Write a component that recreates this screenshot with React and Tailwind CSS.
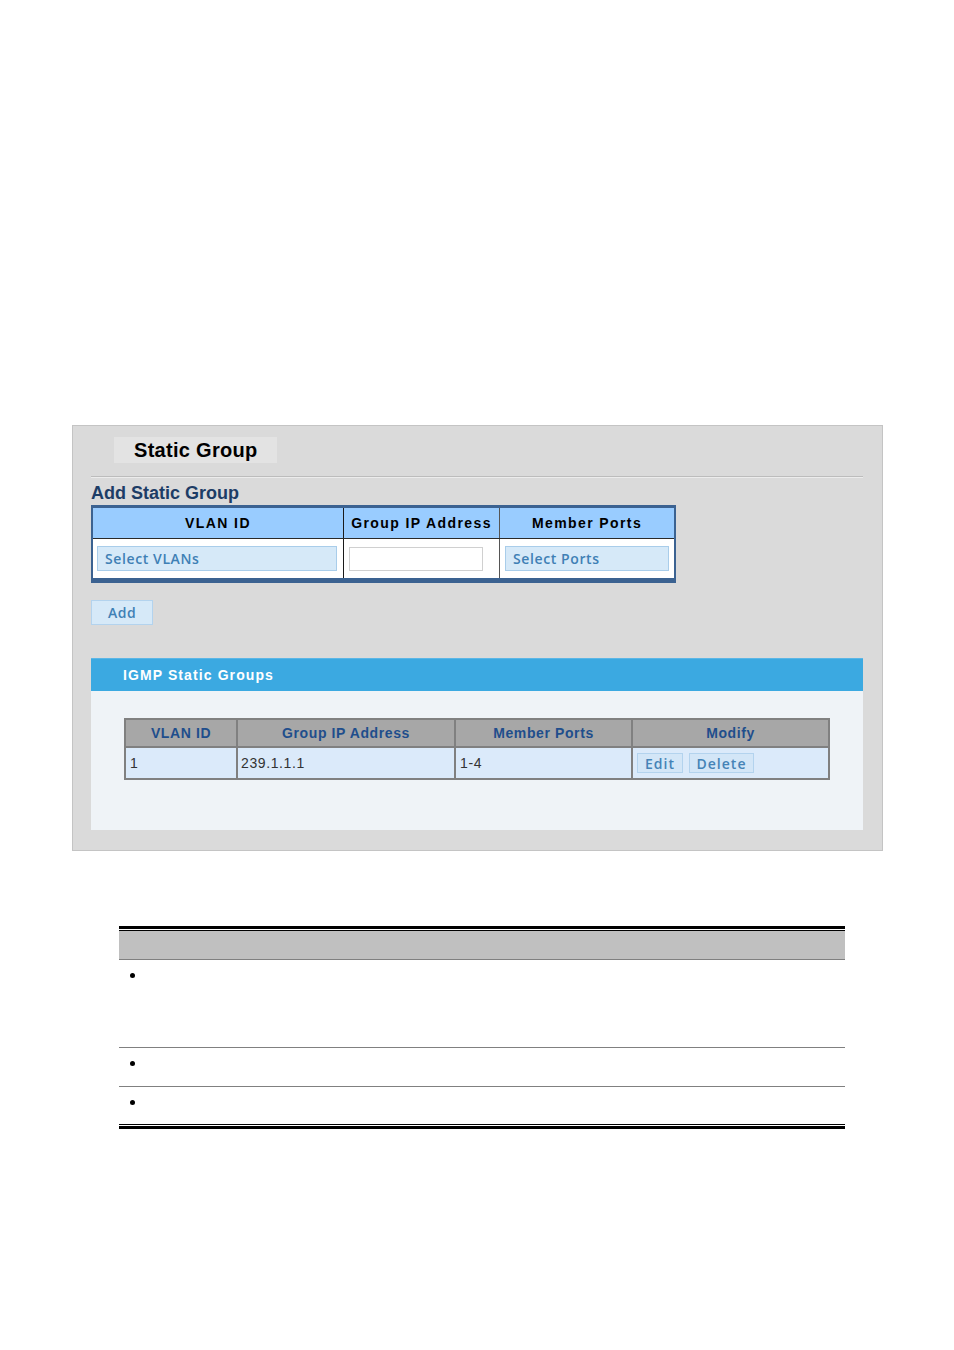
export default function App() {
  return (
    <div className="min-h-[1350px] w-[954px] bg-white pt-[425px] font-['Liberation_Sans',Arial,sans-serif]">
      {/* Static Group panel */}
      <div className="ml-[72px] h-[426px] w-[811px] border border-[#c4c4c4] bg-[#dadada] px-[18px] pt-[11px]">
        <div className="ml-[23px] flex h-[26px] w-[163px] items-center bg-[#e3e3e3] pl-[20px] text-[20px] font-bold tracking-[0.3px] text-black">
          Static Group
        </div>
        <div className="mt-[13px] h-[2px] w-[772px] border-t border-[#bcbcbc] border-b border-b-[#ececec]" />

        <div className="mt-[4px] h-[23px] text-[18px] leading-[23px] font-bold text-[#1d3d66]">Add Static Group</div>

        {/* Add table */}
        <div className="w-[585px] border-x-2 border-t-[3px] border-b-[5px] border-[#3b6291] bg-white">
          <div className="flex h-[31px] border-b border-[#2a2a2a] bg-[#99ccff] text-[14px] font-bold tracking-[1.4px] text-black">
            <div className="flex w-[250px] items-center justify-center">VLAN ID</div>
            <div className="flex w-[156px] items-center justify-center border-l border-[#1a1a1a]">Group IP Address</div>
            <div className="flex flex-1 items-center justify-center border-l border-[#555]">Member Ports</div>
          </div>
          <div className="flex h-[39px]">
            <div className="flex w-[250px] items-center pl-[4px]">
              <div className="flex h-[25px] w-[240px] items-center border border-[#a9cdea] bg-[#d6e9f8] pl-[7px] font-['Open_Sans',sans-serif] text-[14px] font-semibold tracking-[0.6px] text-[#3f80b5]">
                Select VLANs
              </div>
            </div>
            <div className="flex w-[156px] items-center border-l border-[#1a1a1a] pl-[5px]">
              <div className="h-[24px] w-[134px] border border-[#d0d0d0] bg-white" />
            </div>
            <div className="flex flex-1 items-center border-l border-[#555] pl-[5px]">
              <div className="flex h-[25px] w-[164px] items-center border border-[#a9cdea] bg-[#d6e9f8] pl-[7px] font-['Open_Sans',sans-serif] text-[14px] font-semibold tracking-[0.6px] text-[#3f80b5]">
                Select Ports
              </div>
            </div>
          </div>
        </div>

        <div className="mt-[17px] flex h-[25px] w-[62px] items-center justify-center border border-[#b3d3ee] bg-[#d6e9f8] font-['Open_Sans',sans-serif] text-[14px] font-semibold tracking-[0.5px] text-[#3f80b5]">
          Add
        </div>

        {/* IGMP Static Groups */}
        <div className="mt-[33px] w-[772px]">
          <div className="flex h-[33px] items-center border-t border-[#5bb6e6] bg-[#3ba9e1] pl-[32px] text-[14px] font-bold tracking-[1.1px] text-white">
            IGMP Static Groups
          </div>
          <div className="h-[139px] bg-[#eff3f7] pt-[27px] pl-[33px]">
            <div className="w-[706px] border-2 border-[#808080]">
              <div className="flex h-[28px] border-b-2 border-[#808080] bg-[#a7a7a7] text-[14px] font-bold tracking-[0.6px] text-[#1f4e8c]">
                <div className="flex w-[110px] items-center justify-center">VLAN ID</div>
                <div className="flex w-[218px] items-center justify-center border-l-2 border-[#808080]">Group IP Address</div>
                <div className="flex w-[177px] items-center justify-center border-l-2 border-[#808080]">Member Ports</div>
                <div className="flex flex-1 items-center justify-center border-l-2 border-[#808080]">Modify</div>
              </div>
              <div className="flex h-[30px] bg-[#dbeafa] text-[14px] tracking-[0.6px] text-[#333]">
                <div className="flex w-[110px] items-center pl-[4px]">1</div>
                <div className="flex w-[218px] items-center border-l-2 border-[#808080] pl-[3px]">239.1.1.1</div>
                <div className="flex w-[177px] items-center border-l-2 border-[#808080] pl-[4px]">1-4</div>
                <div className="flex flex-1 items-center gap-[6px] border-l-2 border-[#808080] pl-[4px]">
                  <div className="flex h-[20px] w-[46px] items-center justify-center border border-[#b3d3ee] bg-[#d3e6f7] font-['Open_Sans',sans-serif] text-[14px] font-semibold tracking-[1px] text-[#4583b6]">
                    Edit
                  </div>
                  <div className="flex h-[20px] w-[65px] items-center justify-center border border-[#b3d3ee] bg-[#d3e6f7] font-['Open_Sans',sans-serif] text-[14px] font-semibold tracking-[1px] text-[#4583b6]">
                    Delete
                  </div>
                </div>
              </div>
            </div>
          </div>
        </div>
      </div>

      {/* Description table */}
      <div className="mt-[75px] ml-[119px] w-[726px]">
        <div className="h-[3px] bg-black" />
        <div className="mt-[1px] h-[1px] bg-black" />
        <div className="h-[29px] border-b border-[#808080] bg-[#c0c0c0]" />
        <div className="h-[88px] border-b border-[#808080] pl-[11px] pt-[13px]">
          <div className="h-[5px] w-[5px] rounded-full bg-black" />
        </div>
        <div className="h-[39px] border-b border-[#808080] pl-[11px] pt-[13px]">
          <div className="h-[5px] w-[5px] rounded-full bg-black" />
        </div>
        <div className="h-[37px] pl-[11px] pt-[13px]">
          <div className="h-[5px] w-[5px] rounded-full bg-black" />
        </div>
        <div className="h-[1px] bg-black" />
        <div className="mt-[1px] h-[3px] bg-black" />
      </div>
    </div>
  );
}
